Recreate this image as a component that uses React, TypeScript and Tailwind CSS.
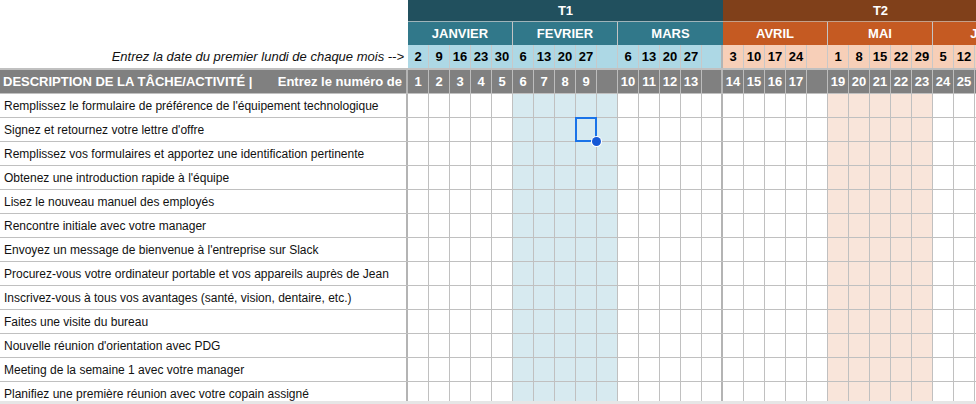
import React from 'react';

type Month = {
  name: string;
  dates: string[];
  weeks: string[];
  shade?: boolean;
};

const t1: Month[] = [
  { name: 'JANVIER', dates: ['2', '9', '16', '23', '30'], weeks: ['1', '2', '3', '4', '5'] },
  { name: 'FEVRIER', dates: ['6', '13', '20', '27', ''], weeks: ['6', '7', '8', '9', ''], shade: true },
  { name: 'MARS', dates: ['6', '13', '20', '27', ''], weeks: ['10', '11', '12', '13', ''] },
];

const t2: Month[] = [
  { name: 'AVRIL', dates: ['3', '10', '17', '24', ''], weeks: ['14', '15', '16', '17', ''] },
  { name: 'MAI', dates: ['1', '8', '15', '22', '29'], weeks: ['19', '20', '21', '22', '23'], shade: true },
  { name: 'JUIN', dates: ['5', '12', '19', '26', ''], weeks: ['24', '25', '26', '27', ''] },
];

const tasks = [
  "Remplissez le formulaire de préférence de l'équipement technologique",
  "Signez et retournez votre lettre d'offre",
  'Remplissez vos formulaires et apportez une identification pertinente',
  "Obtenez une introduction rapide à l'équipe",
  'Lisez le nouveau manuel des employés',
  'Rencontre initiale avec votre manager',
  "Envoyez un message de bienvenue à l'entreprise sur Slack",
  'Procurez-vous votre ordinateur portable et vos appareils auprès de Jean',
  'Inscrivez-vous à tous vos avantages (santé, vision, dentaire, etc.)',
  'Faites une visite du bureau',
  "Nouvelle réunion d'orientation avec PDG",
  'Meeting de la semaine 1 avec votre manager',
  'Planifiez une première réunion avec votre copain assigné',
];

type Col = { date: string; week: string; shade: boolean; q: number; end: boolean };

const cols: Col[] = [...t1, ...t2].flatMap((m, mi) =>
  m.dates.map((d, i) => ({
    date: d,
    week: m.weeks[i],
    shade: !!m.shade,
    q: mi < 3 ? 0 : 1,
    end: mi === 2 && i === 4,
  }))
);

const App: React.FC = () => {
  return (
    <div
      className="w-[976px] h-[404px] overflow-hidden bg-white relative"
      style={{ fontFamily: '"Liberation Sans", Arial, sans-serif' }}
    >
      <div className="w-[1100px]">
        {/* Quarters */}
        <div className="flex h-[22px]">
          <div className="w-[408px] shrink-0" />
          <div className="w-[315px] shrink-0 bg-[#21505e] border-b border-[#9fb4ba] flex items-center justify-center text-white font-bold text-[13px]">
            T1
          </div>
          <div className="w-[315px] shrink-0 bg-[#80401a] border-b border-[#c4a08a] flex items-center justify-center text-white font-bold text-[13px]">
            T2
          </div>
        </div>

        {/* Months */}
        <div className="flex h-[23px]">
          <div className="w-[408px] shrink-0" />
          {t1.map((m, i) => (
            <div
              key={m.name}
              className={`w-[105px] shrink-0 bg-[#31788a] flex items-center justify-center text-white font-bold text-[13px] ${
                i < 2 ? 'border-r border-[#c4c4c4]' : ''
              }`}
            >
              {m.name}
            </div>
          ))}
          {t2.map((m) => (
            <div
              key={m.name}
              className="w-[105px] shrink-0 bg-[#c55a22] border-r border-[#c4c4c4] flex items-center justify-center text-white font-bold text-[13px]"
            >
              {m.name}
            </div>
          ))}
        </div>

        {/* Dates */}
        <div className="flex h-[25px] border-b-2 border-[#c0c0c0]">
          <div className="w-[408px] shrink-0 flex items-center justify-end pr-[4px] italic text-[13px] text-[#111]">
            Entrez la date du premier lundi de chaque mois --&gt;
          </div>
          {cols.map((c, i) => (
            <div
              key={i}
              className={`w-[21px] shrink-0 flex items-center justify-center font-bold text-[13px] text-black border-[#c8c8c8] ${
                c.q === 0 ? 'bg-[#add8e5]' : 'bg-[#f7cfb8]'
              } ${c.end ? 'border-r-2 border-r-[#b4b4b4]' : 'border-r'}`}
            >
              {c.date}
            </div>
          ))}
        </div>

        {/* Gray header */}
        <div className="flex h-[24px] border-b border-[#c0c0c0]">
          <div className="w-[408px] shrink-0 bg-[#808080] border-r-2 border-[#b4b4b4] flex items-center justify-between pl-[3px] pr-[4px] text-white font-bold text-[13px] whitespace-nowrap">
            <span>DESCRIPTION DE LA TÂCHE/ACTIVITÉ |</span>
            <span>Entrez le numéro de</span>
          </div>
          {cols.map((c, i) => (
            <div
              key={i}
              className={`w-[21px] shrink-0 bg-[#808080] flex items-center justify-center text-white font-bold text-[13px] border-[#bdbdbd] ${
                c.end ? 'border-r-2 border-r-[#b4b4b4]' : 'border-r'
              }`}
            >
              {c.week}
            </div>
          ))}
        </div>

        {/* Tasks */}
        {tasks.map((t, r) => (
          <div key={r} className="flex h-[24px] border-b border-[#c0c0c0]">
            <div className="w-[408px] shrink-0 border-r-2 border-[#b4b4b4] flex items-center pl-[4px] text-[12px] text-[#111] whitespace-nowrap">
              {t}
            </div>
            {cols.map((c, i) => (
              <div
                key={i}
                className={`relative w-[21px] shrink-0 border-[#c0c0c0] ${
                  c.shade ? (c.q === 0 ? 'bg-[#d7eaf0]' : 'bg-[#f9e5da]') : 'bg-white'
                } ${c.end ? 'border-r-2 border-r-[#b4b4b4]' : 'border-r'} ${r === 1 && i === 8 ? 'z-10' : ''}`}
              >
                {r === 1 && i === 8 && (
                  <>
                    <div className="absolute -left-px -top-px w-[22px] h-[25px] border-2 border-[#1a73e8]" />
                    <div className="absolute -right-[5px] -bottom-[5px] w-[9px] h-[9px] rounded-full bg-[#1558d6] ring-1 ring-white" />
                  </>
                )}
              </div>
            ))}
          </div>
        ))}
      </div>
      <div className="absolute left-0 bottom-0 w-[976px] h-[3px] bg-[#e6e6e6]" />
    </div>
  );
};

export default App;
